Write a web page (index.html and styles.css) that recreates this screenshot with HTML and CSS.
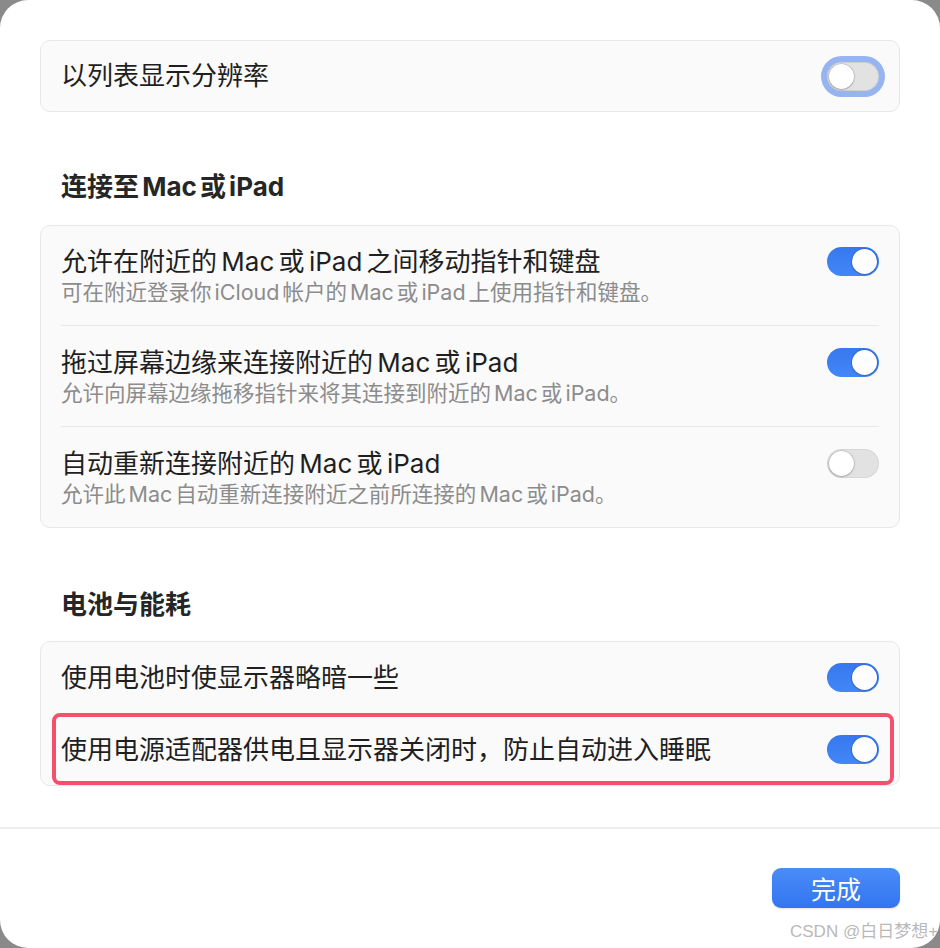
FILE: index.html
```html
<!DOCTYPE html>
<html lang="zh-CN">
<head>
<meta charset="utf-8">
<title>显示器设置</title>
<link rel="stylesheet" href="styles.css">
</head>
<body>
<div class="window">
  <div class="content">
    <div class="card">
      <div class="row single top">
        <span class="title">以列表显示分辨率</span>
        <span class="toggle focus"></span>
      </div>
    </div>

    <h2 class="heading first">连接至 Mac 或 iPad</h2>
    <div class="card">
      <div class="row double">
        <div class="text">
          <div class="title">允许在附近的 Mac 或 iPad 之间移动指针和键盘</div>
          <div class="sub">可在附近登录你 iCloud 帐户的 Mac 或 iPad 上使用指针和键盘。</div>
        </div>
        <span class="toggle on"></span>
      </div>
      <div class="row double">
        <div class="text">
          <div class="title">拖过屏幕边缘来连接附近的 Mac 或 iPad</div>
          <div class="sub">允许向屏幕边缘拖移指针来将其连接到附近的 Mac 或 iPad。</div>
        </div>
        <span class="toggle on"></span>
      </div>
      <div class="row double last">
        <div class="text">
          <div class="title">自动重新连接附近的 Mac 或 iPad</div>
          <div class="sub">允许此 Mac 自动重新连接附近之前所连接的 Mac 或 iPad。</div>
        </div>
        <span class="toggle"></span>
      </div>
    </div>

    <h2 class="heading">电池与能耗</h2>
    <div class="card annotated">
      <div class="row single">
        <span class="title">使用电池时使显示器略暗一些</span>
        <span class="toggle on"></span>
      </div>
      <div class="row single">
        <span class="title">使用电源适配器供电且显示器关闭时，防止自动进入睡眠</span>
        <span class="toggle on"></span>
      </div>
      <div class="highlight"></div>
    </div>
  </div>

  <div class="footer">
    <button class="done">完成</button>
  </div>
  <div class="watermark">CSDN @白日梦想+</div>
</div>
</body>
</html>
```

FILE: styles.css
```css
html, body {
  margin: 0;
  padding: 0;
}

body {
  background: #8a8a8a;
  width: 940px;
  height: 948px;
  overflow: hidden;
  font-family: "Inter", "Noto Sans CJK SC", sans-serif;
  word-spacing: -3px;
}

.window {
  position: relative;
  width: 940px;
  height: 948px;
  background: #ffffff;
  border-radius: 28px;
  overflow: hidden;
  display: flex;
  flex-direction: column;
}

.content {
  padding: 40px 40px 0;
}

.card {
  background: #fafafa;
  border: 1px solid #e7e7e7;
  border-radius: 10px;
}

.annotated {
  position: relative;
}

.row {
  box-sizing: border-box;
  display: flex;
  align-items: center;
  justify-content: space-between;
  padding: 0 20px;
}

.row + .row {
  border-top: 1px solid #e8e8e8;
  margin: 0 20px;
  padding: 0;
}

.row.single {
  height: 71px;
}

.row.single.top {
  height: 70px;
}

.row.single + .row.single {
  height: 72px;
}

.row.double {
  align-items: flex-start;
  padding-top: 20px;
  padding-bottom: 19px;
}

.row.double + .row.double {
  padding-top: 21px;
  padding-bottom: 19px;
}

.row.double.last {
  padding-bottom: 18px;
}

.row.double .toggle {
  margin-top: 1px;
}

.title {
  font-size: 26px;
  line-height: 32px;
  color: #1f1f1f;
  font-weight: 400;
}

.sub {
  font-size: 21.5px;
  line-height: 28px;
  color: #8c8c8c;
}

.heading {
  margin: 61px 0 20px 21px;
  font-size: 26px;
  line-height: 32px;
  font-weight: 700;
  color: #262626;
}

.heading.first {
  margin-top: 59px;
  margin-bottom: 22px;
}

.toggle {
  position: relative;
  flex: none;
  width: 52px;
  height: 29px;
  border-radius: 15px;
  background: #e2e2e2;
  box-shadow: inset 0 0 0 1px rgba(0, 0, 0, 0.05);
}

.toggle::after {
  content: "";
  position: absolute;
  top: 2px;
  left: 2px;
  width: 25px;
  height: 25px;
  border-radius: 50%;
  background: #ffffff;
  box-shadow: 0 0.5px 2px rgba(0, 0, 0, 0.35), 0 0 0 0.5px rgba(0, 0, 0, 0.12);
}

.toggle.on {
  background: linear-gradient(180deg, #3778f0 0%, #4287f7 100%);
  box-shadow: none;
}

.toggle.on::after {
  left: 25px;
}

.toggle.focus {
  box-shadow: 0 0 0 6px #96b3f2, inset 0 0 0 1px rgba(0, 0, 0, 0.08);
}

.highlight {
  position: absolute;
  left: 11px;
  top: 71px;
  width: 834px;
  height: 64px;
  border: 4px solid #f3516b;
  border-radius: 8px;
  pointer-events: none;
}

.footer {
  margin-top: 41px;
  border-top: 2px solid #efefef;
  padding: 39px 40px 0;
  display: flex;
  justify-content: flex-end;
}

.done {
  width: 128px;
  height: 40px;
  border: none;
  border-radius: 9px;
  background: linear-gradient(180deg, #4a8cf7 0%, #3375f0 100%);
  color: #ffffff;
  font-family: "Noto Sans CJK SC", sans-serif;
  font-size: 25px;
  line-height: 40px;
  padding: 0;
  box-shadow: 0 1px 2px rgba(0, 0, 0, 0.12);
}

.watermark {
  position: absolute;
  left: 790px;
  top: 920px;
  font-family: "Liberation Sans", "Noto Sans CJK SC", sans-serif;
  font-size: 17px;
  line-height: 24px;
  color: #b9b9b9;
  white-space: nowrap;
  word-spacing: 0;
}
```
